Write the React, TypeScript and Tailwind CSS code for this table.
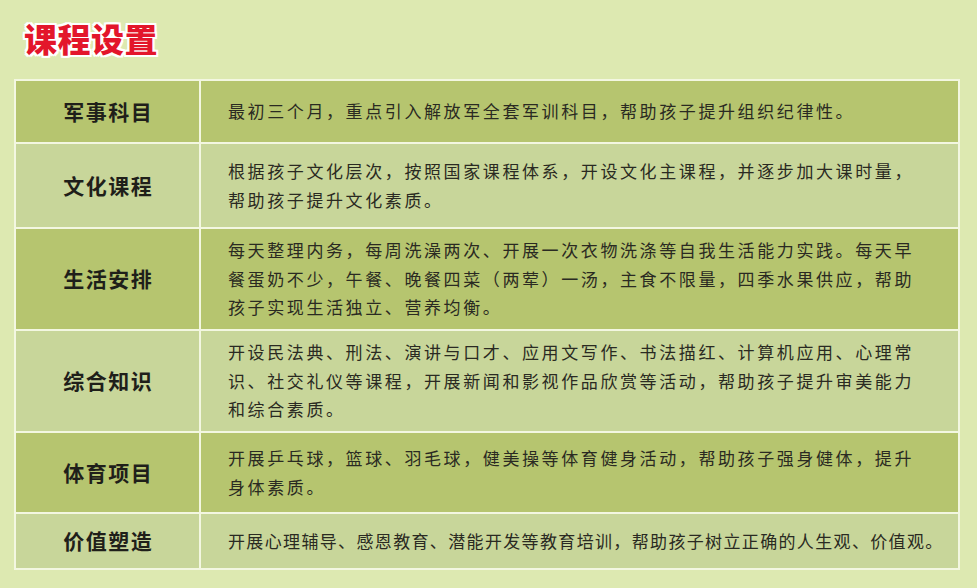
import React from "react";

const rows: { label: string; lines: string[]; h: string; bg: string; tight?: boolean }[] = [
  { label: "军事科目", lines: ["最初三个月，重点引入解放军全套军训科目，帮助孩子提升组织纪律性。"], h: "h-[61px]", bg: "bg-[#b6c56f]" },
  { label: "文化课程", lines: ["根据孩子文化层次，按照国家课程体系，开设文化主课程，并逐步加大课时量，", "帮助孩子提升文化素质。"], h: "h-[83px]", bg: "bg-[#c8d69a]" },
  { label: "生活安排", lines: ["每天整理内务，每周洗澡两次、开展一次衣物洗涤等自我生活能力实践。每天早", "餐蛋奶不少，午餐、晚餐四菜（两荤）一汤，主食不限量，四季水果供应，帮助", "孩子实现生活独立、营养均衡。"], h: "h-[100px]", bg: "bg-[#b6c56f]" },
  { label: "综合知识", lines: ["开设民法典、刑法、演讲与口才、应用文写作、书法描红、计算机应用、心理常", "识、社交礼仪等课程，开展新闻和影视作品欣赏等活动，帮助孩子提升审美能力", "和综合素质。"], h: "h-[100px]", bg: "bg-[#c8d69a]" },
  { label: "体育项目", lines: ["开展乒乓球，篮球、羽毛球，健美操等体育健身活动，帮助孩子强身健体，提升", "身体素质。"], h: "h-[79px]", bg: "bg-[#b6c56f]" },
  { label: "价值塑造", lines: ["开展心理辅导、感恩教育、潜能开发等教育培训，帮助孩子树立正确的人生观、价值观。"], h: "h-[54px]", bg: "bg-[#c8d69a]", tight: true },
];

export default function App() {
  return (
    <div
      className="w-[977px] h-[588px] bg-[#dde9b1] overflow-hidden"
      style={{ fontFamily: '"Noto Sans CJK SC", "Noto Sans", sans-serif' }}
    >
      <div className="pl-[24px] pt-[17px] h-[79px]">
        <div className="text-[33px] leading-[42px] font-black text-[#e3162b] tracking-[0.5px] [text-shadow:0_0_2px_#fff,0_0_2px_#fff,2px_0_0_#fff,-2px_0_0_#fff,0_2px_0_#fff,0_-2px_0_#fff,2px_2px_0_#fff,-2px_-2px_0_#fff,2px_-2px_0_#fff,-2px_2px_0_#fff]">
          课程设置
        </div>
      </div>
      <div className="ml-[14px] w-[946px] bg-[#f3f7e1] p-[2px] flex flex-col gap-[2px]">
        {rows.map((r) => (
          <div key={r.label} className={`grid grid-cols-[183px_1fr] gap-[2px] ${r.h}`}>
            <div className={`${r.bg} flex items-center justify-center`}>
              <span className="text-[21px] font-bold tracking-[1.5px] pl-[1.5px] text-[#1f1f1a]">{r.label}</span>
            </div>
            <div className={`${r.bg} flex flex-col justify-center pl-[27px] text-[#2a2a22]`}>
              {r.lines.map((l, i) => (
                <div
                  key={i}
                  className={`whitespace-nowrap text-[17px] leading-[28.5px] ${r.tight ? "tracking-[1.35px]" : "tracking-[2.6px]"}`}
                >
                  {l}
                </div>
              ))}
            </div>
          </div>
        ))}
      </div>
    </div>
  );
}
